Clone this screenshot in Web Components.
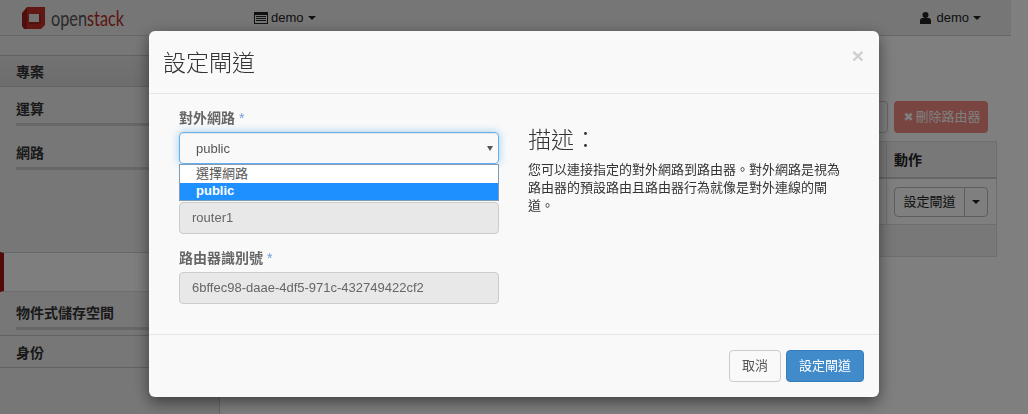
<!DOCTYPE html>
<html lang="zh-Hant">
<head>
<meta charset="utf-8">
<title>設定閘道</title>
<style>
    html, body { margin: 0; padding: 0; height: 100%; overflow: hidden; background: #fff; }
    body { font: 13px/18px "Liberation Sans", "Noto Sans CJK TC", sans-serif; color: #333; }
    .layout { display: flex; align-items: stretch; height: 378px; }
</style>
</head>
<body>
<os-navbar></os-navbar>
<div class="layout">
    <os-sidebar>
        <side-item kind="header">專案</side-item>
        <side-item kind="rule" h="50" top="13">運算</side-item>
        <side-item kind="rule" h="115" top="7">網路</side-item>
        <side-item kind="active"></side-item>
        <side-item kind="rule" line h="44" top="12">物件式儲存空間</side-item>
        <side-item kind="plain" line h="32" top="8">身份</side-item>
    </os-sidebar>
    <os-content></os-content>
</div>
<os-modal heading="設定閘道">
    <div slot="left">
        <os-field label="對外網路" style="margin-bottom:38px">
            <os-select value="public" options="選擇網路,public" selected="1"></os-select>
        </os-field>
        <os-input value="router1"></os-input>
        <os-field label="路由器識別號" style="margin-top:15px">
            <os-input value="6bffec98-daae-4df5-971c-432749422cf2"></os-input>
        </os-field>
    </div>
    <div slot="right">
        <os-help heading="描述：">您可以連接指定的對外網路到路由器。對外網路是視為路由器的預設路由且路由器行為就像是對外連線的閘道。</os-help>
    </div>
    <os-btn slot="footer">取消</os-btn>
    <os-btn slot="footer" kind="primary">設定閘道</os-btn>
</os-modal>

<script>
const CJK = '"Liberation Sans", "Noto Sans CJK TC", sans-serif';

class OsNavbar extends HTMLElement {
    constructor() {
        super();
        this.attachShadow({ mode: 'open' });
    }
    connectedCallback() {
        this.shadowRoot.innerHTML = `
            <style>
                :host { display: block; height: 36px; width: 1011px; background: #ededed; border-bottom: 1px solid #cfcfcf; box-sizing: border-box; }
                .bar { display: flex; align-items: center; height: 35px; color: #222; font: 13px ${CJK}; }
                .logo { display: flex; align-items: center; gap: 5px; margin-left: 21px; width: 233px; }
                .word { font: 22px/24px "Lato", sans-serif; color: #555; transform: scaleX(.74); transform-origin: left center; width: 90px; }
                .word b { font-weight: 400; color: #b52a22; }
                .menu { display: flex; align-items: center; }
                .caret { width: 0; height: 0; border: 4px solid transparent; border-top-color: #222; border-bottom: 0; margin-left: 4px; }
                .spacer { flex: 1; }
                svg { display: block; }
            </style>
            <div class="bar">
                <div class="logo">
                    <svg width="25" height="25" viewBox="0 0 25 25">
                        <path fill="#9c1f18" d="M1 8 L6 2 V24 H3 L1 21 Z"/>
                        <path fill="#c22e26" d="M6 2 H24 V20 L20 24 H6 Z"/>
                        <path fill="#e4e4e4" d="M8 9 H18 V17 H8 Z"/>
                        <path fill="#a8231c" d="M18 9 H20 V18 L18 19 H8 V17 H18 Z"/>
                    </svg>
                    <div class="word">open<b>stack</b></div>
                </div>
                <div class="menu">
                    <svg width="14" height="12" viewBox="0 0 14 12" style="margin-right:3px">
                        <path fill="#222" d="M0 0H14V12H0ZM1 3V11H13V3ZM2 4H12V5H2ZM2 6H12V7H2ZM2 8H12V9H2Z" fill-rule="evenodd"/>
                    </svg>
                    demo<span class="caret"></span>
                </div>
                <div class="spacer"></div>
                <div class="menu" style="margin-right:30px">
                    <svg width="11" height="12" viewBox="0 0 11 12" style="margin-right:5px">
                        <circle cx="5.5" cy="3" r="3" fill="#222"/>
                        <path fill="#222" d="M0 12V8.5C0 6.5 2 6 3 6H8C9 6 11 6.5 11 8.5V12Z"/>
                    </svg>
                    demo<span class="caret"></span>
                </div>
            </div>
        `;
    }
}

class OsSidebar extends HTMLElement {
    constructor() {
        super();
        this.attachShadow({ mode: 'open' });
    }
    connectedCallback() {
        this.shadowRoot.innerHTML = `
            <style>
                :host { display: block; width: 220px; flex: none; padding-top: 19px; box-sizing: border-box; background: #eeeeee; border-right: 1px solid #cfcfcf; }
            </style>
            <slot></slot>
        `;
    }
}

class SideItem extends HTMLElement {
    constructor() {
        super();
        this.attachShadow({ mode: 'open' });
    }
    connectedCallback() {
        const kind = this.getAttribute('kind');
        const h = this.getAttribute('h') || 32;
        const top = this.getAttribute('top') || 7;
        this.shadowRoot.innerHTML = `
            <style>
                :host { display: block; box-sizing: border-box; height: ${h}px; padding: ${top}px 0 0 16px; font: bold 14px/18px ${CJK}; color: #333; }
                :host([line]) { border-bottom: 1px solid #c4c4c4; }
                :host([kind="header"]) { height: 32px; border-top: 1px solid #c4c4c4; border-bottom: 1px solid #c4c4c4; background: linear-gradient(#e6e6e6, #dadada); }
                :host([kind="active"]) { height: 40px; border-left: 4px solid #a5170e; border-top: 1px solid #cfcfcf; border-bottom: 1px solid #dcdcdc; background: #fcfcfc; padding: 0; }
                .rule { height: 3px; background: #cfcfcf; margin-top: 5px; }
            </style>
            <slot></slot>
            ${kind === 'rule' ? '<div class="rule"></div>' : ''}
        `;
    }
}

class OsContent extends HTMLElement {
    constructor() {
        super();
        this.attachShadow({ mode: 'open' });
    }
    connectedCallback() {
        this.shadowRoot.innerHTML = `
            <style>
                :host { display: block; flex: 1; padding-top: 65px; padding-right: 31px; box-sizing: border-box; }
                .actions { display: flex; justify-content: flex-end; gap: 6px; height: 32px; margin-right: 9px; }
                .ghost { width: 60px; box-sizing: border-box; border: 1px solid #ccc; border-radius: 4px; }
                .danger { width: 94px; box-sizing: border-box; background: #ee6b5f; color: #fff; border-radius: 4px; font: 13px/32px ${CJK}; text-align: center; opacity: .78; padding-left: 2px; }
                .danger i { font: bold 12px "DejaVu Sans", sans-serif; margin-right: 2px; }
                table { margin: 8px 0 0 auto; width: 137px; border-collapse: collapse; font: 13px/18px ${CJK}; }
                td, th { border: 1px solid #ddd; padding: 0; }
                th { height: 35px; text-align: left; padding-left: 7px; font-size: 14px; color: #222; background: #f1f1f1; border-bottom: 2px solid #ccc; }
                td.act { height: 46px; padding: 8px 0 0 7px; vertical-align: top; box-sizing: border-box; }
                tr.foot td { height: 31px; background: #f1f1f1; }
                .gut { width: 25px; }
                .split { display: flex; width: 94px; height: 30px; box-sizing: border-box; border: 1px solid #bbb; border-radius: 4px; line-height: 28px; color: #222; }
                .split span { width: 69px; text-align: center; border-right: 1px solid #bbb; }
                .split b { flex: 1; display: flex; align-items: center; justify-content: center; }
                .split b::after { content: ""; border: 4px solid transparent; border-top-color: #222; border-bottom: 0; }
            </style>
            <div class="actions">
                <div class="ghost"></div>
                <div class="danger"><i>✖</i>刪除路由器</div>
            </div>
            <table>
                <tr><th class="gut" style="padding:0"></th><th>動作</th></tr>
                <tr><td class="gut"></td><td class="act"><div class="split"><span>設定閘道</span><b></b></div></td></tr>
                <tr class="foot"><td colspan="2"></td></tr>
            </table>
        `;
    }
}

class OsModal extends HTMLElement {
    constructor() {
        super();
        this.attachShadow({ mode: 'open' });
    }
    connectedCallback() {
        this.shadowRoot.innerHTML = `
            <style>
                :host { display: block; position: fixed; inset: 0; background: rgba(0, 0, 0, .5); }
                .dialog { position: absolute; left: 149px; top: 31px; width: 730px; height: 366px; display: flex; flex-direction: column; box-sizing: border-box; background: #f9f9f9; border-radius: 6px; box-shadow: 0 5px 15px rgba(0, 0, 0, .5); }
                header { display: flex; justify-content: space-between; height: 63px; box-sizing: border-box; padding: 17px 15px 0; border-bottom: 1px solid #e5e5e5; }
                h3 { margin: 0 0 0 -1px; font: 300 23px/30px ${CJK}; color: #333; }
                .close { font: bold 21px/1 "Liberation Sans", sans-serif; color: #cfcfcf; margin-top: -3px; }
                main { flex: 1; display: flex; padding: 15px 30px 0; }
                .left { width: 320px; }
                .right { margin-left: 29px; width: 320px; }
                footer { height: 63px; box-sizing: border-box; border-top: 1px solid #e5e5e5; padding-top: 15px; padding-right: 15px; display: flex; justify-content: flex-end; gap: 5px; }
            </style>
            <div class="dialog" role="dialog">
                <header><h3>${this.getAttribute('heading')}</h3><span class="close">×</span></header>
                <main>
                    <div class="left"><slot name="left"></slot></div>
                    <div class="right"><slot name="right"></slot></div>
                </main>
                <footer><slot name="footer"></slot></footer>
            </div>
        `;
    }
}

class OsField extends HTMLElement {
    constructor() {
        super();
        this.attachShadow({ mode: 'open' });
    }
    connectedCallback() {
        this.shadowRoot.innerHTML = `
            <style>
                :host { display: block; }
                label { display: block; height: 23px; font: bold 14px/18px ${CJK}; color: #666; }
                em { font: 14px "Liberation Sans", sans-serif; color: #6d9fd4; margin-left: 4px; }
            </style>
            <label>${this.getAttribute('label')}<em>*</em></label>
            <slot></slot>
        `;
    }
}

class OsSelect extends HTMLElement {
    constructor() {
        super();
        this.attachShadow({ mode: 'open' });
    }
    connectedCallback() {
        const opts = this.getAttribute('options').split(',');
        const sel = +this.getAttribute('selected');
        this.shadowRoot.innerHTML = `
            <style>
                :host { display: block; position: relative; height: 32px; }
                .box { height: 32px; box-sizing: border-box; border: 1px solid #66afe9; border-radius: 4px; box-shadow: inset 0 1px 1px rgba(0,0,0,.075), 0 0 8px rgba(102,175,233,.6); padding: 1px 0 0 16px; font: 13px/30px ${CJK}; color: #555; }
                .arrow { position: absolute; right: 6px; top: 14px; border: 3px solid transparent; border-top: 5px solid #555; border-bottom: 0; }
                ul { position: absolute; left: 0; right: 0; top: 32px; margin: 0; padding: 0; list-style: none; background: #fff; border: 1px solid #7f9db9; font: 13px/17px ${CJK}; color: #555; z-index: 1; }
                li { padding-left: 16px; height: 18px; }
                li.on { background: #1e90ff; color: #fff; font-weight: bold; height: 17px; line-height: 15px; }
            </style>
            <div class="box">${this.getAttribute('value')}</div>
            <span class="arrow"></span>
            <ul>${opts.map((o, i) => `<li class="${i === sel ? 'on' : ''}">${o}</li>`).join('')}</ul>
        `;
    }
}

class OsInput extends HTMLElement {
    constructor() {
        super();
        this.attachShadow({ mode: 'open' });
    }
    connectedCallback() {
        this.shadowRoot.innerHTML = `
            <style>
                :host { display: block; height: 32px; box-sizing: border-box; background: #e8e8e8; border: 1px solid #ccc; border-radius: 4px; padding-left: 12px; font: 13px/30px ${CJK}; color: #666; }
            </style>
            ${this.getAttribute('value')}
        `;
    }
}

class OsHelp extends HTMLElement {
    constructor() {
        super();
        this.attachShadow({ mode: 'open' });
    }
    connectedCallback() {
        this.shadowRoot.innerHTML = `
            <style>
                :host { display: block; font: 13px/18px ${CJK}; color: #333; padding-top: 18px; width: 318px; }
                h3 { margin: 0 0 8px; font: 300 23px/26px ${CJK}; color: #333; }
            </style>
            <h3>${this.getAttribute('heading')}</h3>
            <slot></slot>
        `;
    }
}

class OsBtn extends HTMLElement {
    constructor() {
        super();
        this.attachShadow({ mode: 'open' });
    }
    connectedCallback() {
        this.shadowRoot.innerHTML = `
            <style>
                :host { display: block; height: 32px; box-sizing: border-box; padding: 0 12px; border: 1px solid #ccc; border-radius: 4px; background: #f9f9f9; color: #555; font: 13px/30px ${CJK}; }
                :host([kind="primary"]) { background: #428bca; border-color: #357ebd; color: #fff; }
            </style>
            <slot></slot>
        `;
    }
}

customElements.define('os-navbar', OsNavbar);
customElements.define('os-sidebar', OsSidebar);
customElements.define('side-item', SideItem);
customElements.define('os-content', OsContent);
customElements.define('os-modal', OsModal);
customElements.define('os-field', OsField);
customElements.define('os-select', OsSelect);
customElements.define('os-input', OsInput);
customElements.define('os-help', OsHelp);
customElements.define('os-btn', OsBtn);
</script>
</body>
</html>
